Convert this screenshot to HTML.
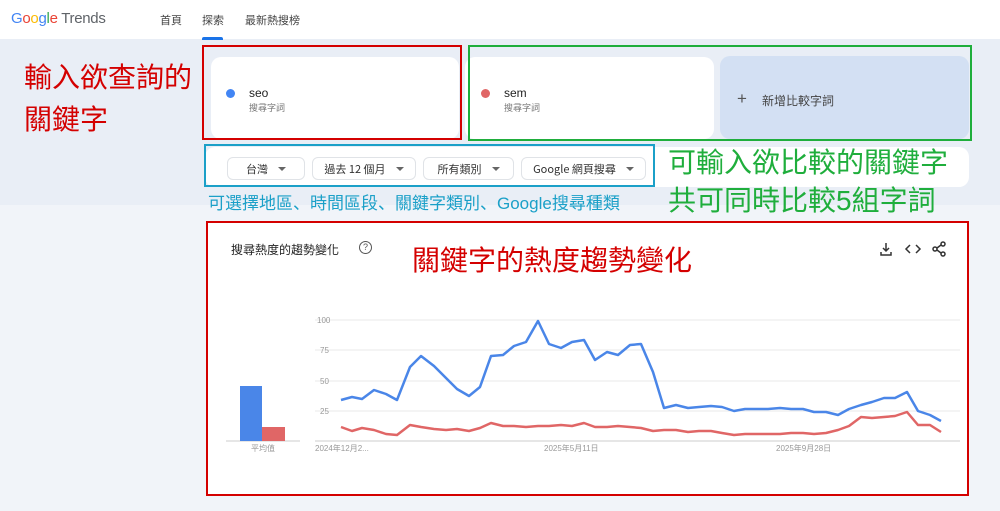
<!DOCTYPE html>
<html><head><meta charset="utf-8"><style>
*{margin:0;padding:0;box-sizing:border-box}
body{width:1000px;height:511px;position:relative;overflow:hidden;background:#f1f4f9;font-family:"Liberation Sans","Noto Sans CJK TC",sans-serif}
.a{position:absolute}
.cjk{font-family:"Noto Sans CJK TC","Liberation Sans",sans-serif}
.ann{font-family:"Liberation Sans","WenQuanYi Zen Hei",sans-serif;font-weight:normal}
.pill{position:absolute;top:157px;height:23px;border:1px solid #e0e3e7;border-radius:6px;background:#fff;font-size:11px;color:#333;display:flex;align-items:center;justify-content:center;gap:10px}
.tri{width:0;height:0;border-left:4px solid transparent;border-right:4px solid transparent;border-top:4px solid #666}
</style></head><body>
<div class="a" style="left:0;top:0;width:1000px;height:39px;background:#fff"></div>
<div class="a" style="left:0;top:39px;width:1000px;height:166px;background:#e9eef6"></div>
<div class="a" style="left:11px;top:10px;font-size:15px;letter-spacing:-0.3px"><span style="color:#4285f4">G</span><span style="color:#ea4335">o</span><span style="color:#fbbc05">o</span><span style="color:#4285f4">g</span><span style="color:#34a853">l</span><span style="color:#ea4335">e</span> <span style="color:#5f6368">Trends</span></div>
<div class="a cjk" style="left:160px;top:12px;font-size:11px;color:#444">首頁</div>
<div class="a cjk" style="left:202px;top:12px;font-size:11px;color:#444">探索</div>
<div class="a" style="left:202px;top:37px;width:21px;height:3px;background:#1a73e8;border-radius:2px 2px 0 0"></div>
<div class="a cjk" style="left:245px;top:12px;font-size:11px;color:#444">最新熱搜榜</div>

<div class="a" style="left:211px;top:57px;width:248px;height:82px;background:#fff;border-radius:10px"></div>
<div class="a" style="left:226px;top:89px;width:9px;height:9px;border-radius:50%;background:#4285f4"></div>
<div class="a" style="left:249px;top:86px;font-size:12px;color:#222">seo</div>
<div class="a cjk" style="left:249px;top:101px;font-size:9px;color:#777">搜尋字詞</div>
<div class="a" style="left:465px;top:57px;width:249px;height:82px;background:#fff;border-radius:10px"></div>
<div class="a" style="left:481px;top:89px;width:9px;height:9px;border-radius:50%;background:#e06666"></div>
<div class="a" style="left:504px;top:86px;font-size:12px;color:#222">sem</div>
<div class="a cjk" style="left:504px;top:101px;font-size:9px;color:#777">搜尋字詞</div>
<div class="a" style="left:720px;top:56px;width:249px;height:83px;background:#d3e0f3;border-radius:10px"></div>
<div class="a" style="left:737px;top:89px;font-size:17px;color:#555">+</div>
<div class="a cjk" style="left:762px;top:92px;font-size:12px;color:#444">新增比較字詞</div>

<div class="a" style="left:205px;top:147px;width:764px;height:40px;background:#fff;border-radius:10px"></div>
<div class="pill cjk" style="left:227px;width:78px">台灣 <span class="tri"></span></div>
<div class="pill cjk" style="left:312px;width:104px">過去 12 個月 <span class="tri"></span></div>
<div class="pill cjk" style="left:423px;width:91px">所有類別 <span class="tri"></span></div>
<div class="pill cjk" style="left:521px;width:125px">Google 網頁搜尋 <span class="tri"></span></div>

<div class="a" style="left:202px;top:45px;width:260px;height:95px;border:2px solid #d40000"></div>
<div class="a" style="left:468px;top:45px;width:504px;height:96px;border:2px solid #1fae3c"></div>
<div class="a" style="left:204px;top:144px;width:451px;height:43px;border:2px solid #1ba0c8"></div>
<div class="a ann" style="left:24px;top:57px;font-size:28px;line-height:42px;color:#d40000;white-space:nowrap">輸入欲查詢的<br>關鍵字</div>
<div class="a ann" style="left:668px;top:144px;font-size:28px;line-height:38px;color:#1fae3c;white-space:nowrap">可輸入欲比較的關鍵字<br>共可同時比較5組字詞</div>
<div class="a ann" style="left:208px;top:191px;font-size:17px;line-height:25px;color:#1ba0c8;white-space:nowrap">可選擇地區、時間區段、關鍵字類別、Google搜尋種類</div>

<div class="a" style="left:206px;top:221px;width:763px;height:275px;background:#fff;border:2px solid #d40000"></div>
<div class="a cjk" style="left:231px;top:241px;font-size:12px;color:#222">搜尋熱度的趨勢變化</div>
<div class="a" style="left:359px;top:241px;width:13px;height:13px;border:1.3px solid #555;border-radius:50%;font-size:9px;color:#555;text-align:center;line-height:11px">?</div>
<div class="a ann" style="left:412px;top:243px;font-size:28px;line-height:36px;color:#d40000;white-space:nowrap">關鍵字的熱度趨勢變化</div>
<svg class="a" style="left:878px;top:240px" width="72" height="18" viewBox="0 0 72 18" fill="none" stroke="#333" stroke-width="1.5">
<path d="M8 3v8M5 8l3 3 3-3M3 12v3h10v-3"/>
<path d="M32 5l-4 4 4 4M38 5l4 4-4 4"/>
<circle cx="65" cy="4" r="2"/><circle cx="57" cy="9" r="2"/><circle cx="65" cy="14" r="2"/><path d="M59 8l4-3M59 10l4 3"/>
</svg>
<svg class="a" style="left:0;top:0" width="1000" height="511">
<g stroke="#e8e8e8" stroke-width="1"><line x1="315" y1="320" x2="960" y2="320"/><line x1="315" y1="350" x2="960" y2="350"/><line x1="315" y1="381" x2="960" y2="381"/><line x1="315" y1="411" x2="960" y2="411"/></g>
<line x1="315" y1="441" x2="960" y2="441" stroke="#ccc"/>
<line x1="226" y1="441" x2="300" y2="441" stroke="#ccc"/>
<rect x="240" y="386" width="22" height="55" fill="#4a86e8"/>
<rect x="262" y="427" width="23" height="14" fill="#e06666"/>
<g font-size="8" fill="#999" font-family="Liberation Sans,Noto Sans CJK TC,sans-serif">
<text x="317" y="323">100</text><text x="320" y="353">75</text><text x="320" y="384">50</text><text x="320" y="414">25</text>
<text x="251" y="451">平均值</text><text x="315" y="451">2024年12月2...</text><text x="544" y="451">2025年5月11日</text><text x="776" y="451">2025年9月28日</text></g>
<polyline fill="none" stroke="#4a86e8" stroke-width="2.5" stroke-linejoin="round" points="341,400 352,397 362,399 374,390 386,394 397,400 410,367 421,356 434,366 446,378 457,389 469,396 480,387 491,356 503,355 514,346 526,342 538,321 549,344 561,348 572,342 584,340 595,360 607,352 618,355 630,345 641,344 653,372 664,408 676,405 688,408 699,407 711,406 722,407 734,411 745,409 757,409 768,409 780,408 791,409 803,409 814,412 826,412 838,415 849,409 861,405 872,402 884,398 895,398 907,392 918,411 930,415 941,421"/>
<polyline fill="none" stroke="#e06666" stroke-width="2.5" stroke-linejoin="round" points="341,427 352,431 362,428 374,430 386,434 397,435 410,425 421,427 434,429 446,430 457,429 469,431 480,428 491,423 503,426 514,426 526,427 538,426 549,426 561,425 572,426 584,423 595,427 607,427 618,426 630,427 641,428 653,431 664,430 676,430 688,432 699,431 711,431 722,433 734,435 745,434 757,434 768,434 780,434 791,433 803,433 814,434 826,433 838,430 849,426 861,417 872,418 884,417 895,416 907,412 918,425 930,425 941,432"/>
</svg>
</body></html>
